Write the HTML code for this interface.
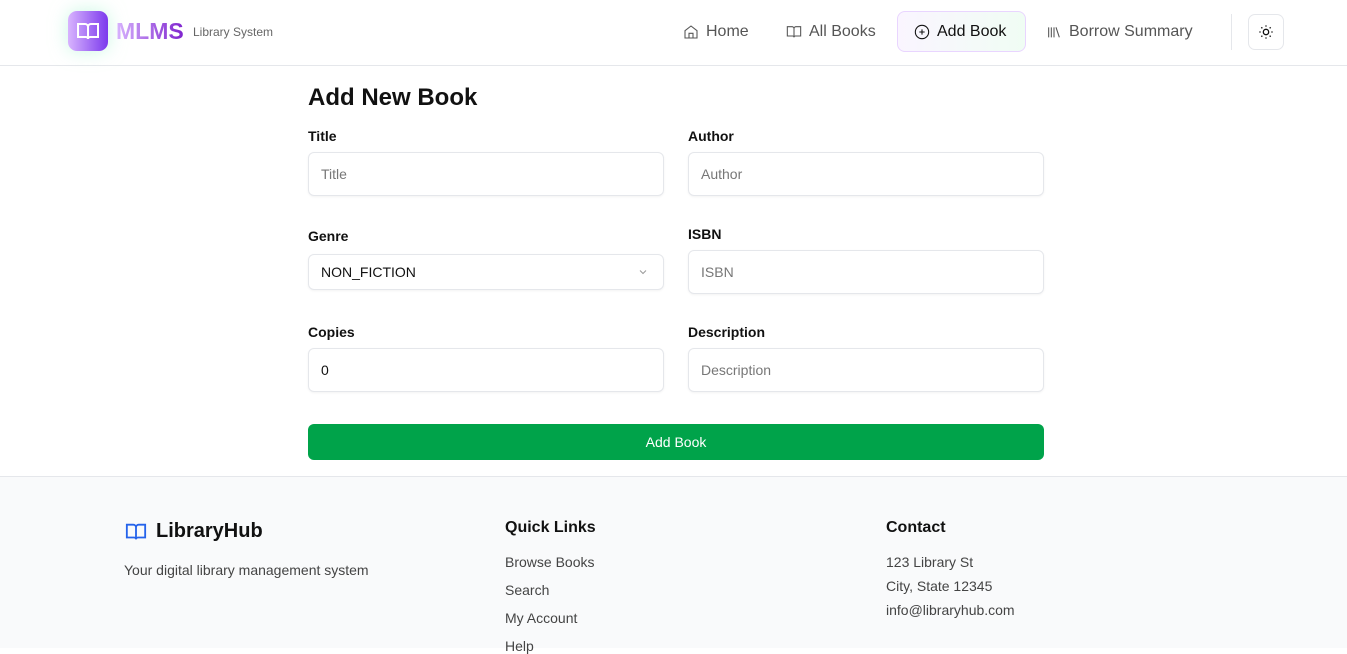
<!DOCTYPE html>
<html><head><meta charset="utf-8"><style>
*{box-sizing:border-box;margin:0;padding:0}
body{width:1347px;height:648px;overflow:hidden;font-family:"Liberation Sans",sans-serif;background:#fff;color:#111;position:relative}
.hdr{position:absolute;left:0;top:0;width:1347px;height:66px;border-bottom:1px solid #e5e7eb;background:#fff}
.logo{position:absolute;left:68px;top:11px;width:40px;height:40px;border-radius:9px;background:linear-gradient(90deg,#d8b4fe,#7c3aed);box-shadow:0 0 18px rgba(167,243,208,.6)}
.mlms{position:absolute;left:116px;top:18px;font-size:23px;font-weight:bold;background:linear-gradient(90deg,#d8b4fe,#7e22ce);-webkit-background-clip:text;color:transparent}
.sub{position:absolute;left:193px;top:25px;font-size:12px;color:#666}
.nav{position:absolute;top:11px;height:41px;display:flex;align-items:center;font-size:16px;color:#555;gap:7px}
.nav svg{stroke:#555;fill:none;stroke-width:1.6}
.active{border:1px solid #e9d5ff;border-radius:8px;background:linear-gradient(90deg,#faf5ff,#f0fdf4);color:#111;padding:0 16px}
.active svg{stroke:#111}
.sep{position:absolute;left:1231px;top:14px;width:1px;height:36px;background:#e5e7eb}
.theme{position:absolute;left:1248px;top:14px;width:36px;height:36px;border:1px solid #e5e7eb;border-radius:7px;display:flex;align-items:center;justify-content:center}
h1{position:absolute;left:308px;top:84px;font-size:24px;font-weight:bold}
.lbl{position:absolute;font-size:14px;font-weight:bold}
.inp{position:absolute;width:356px;height:44px;border:1px solid #e5e7eb;border-radius:6px;padding-left:12px;display:flex;align-items:center;font-size:14px;color:#777;box-shadow:0 1px 2px rgba(0,0,0,.05)}
.btn{position:absolute;left:308px;top:424px;width:736px;height:36px;background:#00a34a;border-radius:6px;color:#fff;font-size:14px;display:flex;align-items:center;justify-content:center}
.ftr{position:absolute;left:0;top:476px;width:1347px;height:172px;background:#f9fafb;border-top:1px solid #e5e7eb;font-size:14px;color:#444}
.ftr h3{position:absolute;font-size:16px;font-weight:bold;color:#111}
.ftr p{position:absolute}
</style></head><body>
<div class="hdr">
<div class="logo"><svg width="40" height="40" viewBox="0 0 40 40" fill="none" stroke="#fff" stroke-width="2"><path d="M10 13h7a3 3 0 0 1 3 3v12a2 2 0 0 0-2-2h-8z M30 13h-7a3 3 0 0 0-3 3v12a2 2 0 0 1 2-2h8z"/></svg></div>
<div class="mlms">MLMS</div><div class="sub">Library System</div>
<div class="nav" style="left:683px"><svg width="16" height="16" viewBox="0 0 24 24"><path d="M3 10l9-7 9 7v11H3z M9 21v-7h6v7"/></svg>Home</div>
<div class="nav" style="left:786px"><svg width="16" height="16" viewBox="0 0 24 24"><path d="M2 4h7a3 3 0 0 1 3 3v13a2 2 0 0 0-2-2H2z M22 4h-7a3 3 0 0 0-3 3v13a2 2 0 0 1 2-2h8z"/></svg>All Books</div>
<div class="nav active" style="left:897px;width:129px"><svg width="16" height="16" viewBox="0 0 24 24"><circle cx="12" cy="12" r="10"/><path d="M8 12h8M12 8v8"/></svg>Add Book</div>
<div class="nav" style="left:1046px"><svg width="16" height="16" viewBox="0 0 24 24"><path d="M4 5v15M8 5v15M12 5v15M15 5l5 15"/></svg>Borrow Summary</div>
<div class="sep"></div>
<div class="theme"><svg width="16" height="16" viewBox="0 0 24 24" fill="none" stroke="#111" stroke-width="2"><circle cx="12" cy="12" r="4"/><path d="M12 2v2M12 20v2M2 12h2M20 12h2M5 5l1.5 1.5M17.5 17.5L19 19M5 19l1.5-1.5M17.5 6.5L19 5"/></svg></div>
</div>
<h1>Add New Book</h1>
<div class="lbl" style="left:308px;top:128px">Title</div>
<div class="lbl" style="left:688px;top:128px">Author</div>
<div class="inp" style="left:308px;top:152px">Title</div>
<div class="inp" style="left:688px;top:152px">Author</div>
<div class="lbl" style="left:308px;top:228px">Genre</div>
<div class="lbl" style="left:688px;top:226px">ISBN</div>
<div class="inp" style="left:308px;top:254px;height:36px;color:#111">NON_FICTION<svg style="position:absolute;right:14px" width="12" height="12" viewBox="0 0 24 24" fill="none" stroke="#999" stroke-width="2"><path d="M6 9l6 6 6-6"/></svg></div>
<div class="inp" style="left:688px;top:250px">ISBN</div>
<div class="lbl" style="left:308px;top:324px">Copies</div>
<div class="lbl" style="left:688px;top:324px">Description</div>
<div class="inp" style="left:308px;top:348px;color:#111">0</div>
<div class="inp" style="left:688px;top:348px">Description</div>
<div class="btn">Add Book</div>
<div class="ftr">
<svg style="position:absolute;left:124px;top:44px" width="24" height="22" viewBox="0 0 24 24" fill="none" stroke="#2563eb" stroke-width="2"><path d="M2 4h7a3 3 0 0 1 3 3v13a2 2 0 0 0-2-2H2z M22 4h-7a3 3 0 0 0-3 3v13a2 2 0 0 1 2-2h8z"/></svg>
<h3 style="left:156px;top:43px;font-size:20px">LibraryHub</h3>
<p style="left:124px;top:85px">Your digital library management system</p>
<h3 style="left:505px;top:42px">Quick Links</h3>
<p style="left:505px;top:77px">Browse Books</p>
<p style="left:505px;top:105px">Search</p>
<p style="left:505px;top:133px">My Account</p>
<p style="left:505px;top:161px">Help</p>
<h3 style="left:886px;top:42px">Contact</h3>
<p style="left:886px;top:77px">123 Library St</p>
<p style="left:886px;top:101px">City, State 12345</p>
<p style="left:886px;top:125px">info@libraryhub.com</p>
</div>
</body></html>
